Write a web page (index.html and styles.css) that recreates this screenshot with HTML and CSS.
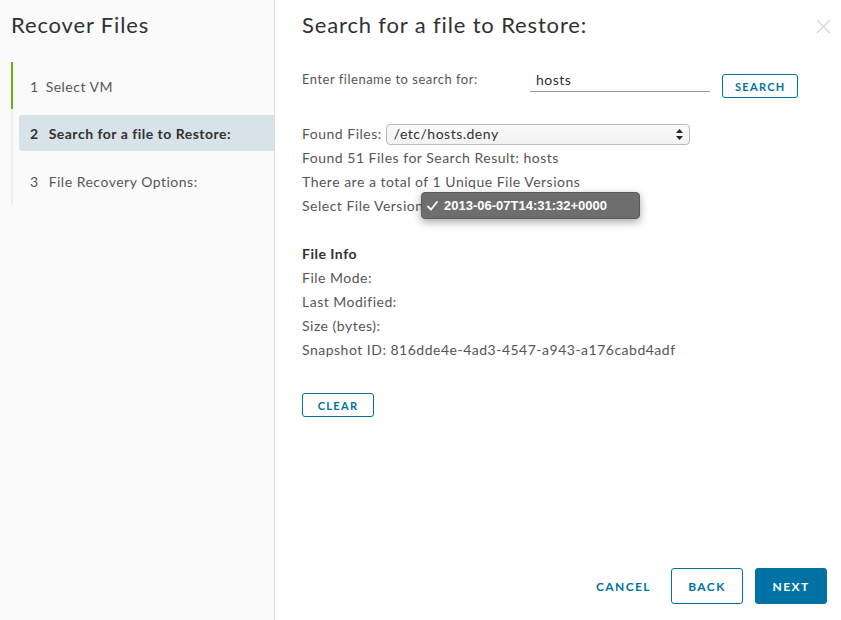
FILE: index.html
```html
<!DOCTYPE html>
<html>
<head>
<meta charset="utf-8">
<link rel="stylesheet" href="styles.css">
</head>
<body>
<div class="wizard">
  <aside class="sidebar">
    <h1 class="title">Recover Files</h1>
    <nav class="steps">
      <div class="step done"><div class="step-label"><span class="num">1</span>Select VM</div></div>
      <div class="step active"><div class="step-label"><span class="num">2</span>Search for a file to Restore:</div></div>
      <div class="step"><div class="step-label"><span class="num">3</span>File Recovery Options:</div></div>
    </nav>
  </aside>
  <main class="main">
    <button class="close" aria-label="Close">
      <svg width="15" height="15" viewBox="0 0 15 15"><path d="M1 1L14 14M14 1L1 14" stroke="#d4d4d4" stroke-width="1.3" fill="none"/></svg>
    </button>
    <h2 class="title">Search for a file to Restore:</h2>
    <div class="search-row">
      <label class="search-label">Enter filename to search for:</label>
      <div class="input">hosts</div>
      <button class="btn btn-outline btn-sm">SEARCH</button>
    </div>
    <div class="results">
      <div class="line found-row">
        <span>Found Files:</span>
        <div class="select"><span>/etc/hosts.deny</span>
          <svg class="arrows" width="7" height="11" viewBox="0 0 7 11"><path d="M3.5 0L7 4H0Z M3.5 11L0 7H7Z" fill="#222"/></svg>
        </div>
      </div>
      <div class="line">Found 51 Files for Search Result: hosts</div>
      <div class="line">There are a total of 1 Unique File Versions</div>
      <div class="line version-row">Select File Version:
        <div class="popup"><svg class="check" width="11" height="10" viewBox="0 0 11 10"><path d="M1 5.5L4 8.5L10 1" stroke="#fff" stroke-width="1.8" fill="none" stroke-linecap="round" stroke-linejoin="round"/></svg>2013-06-07T14:31:32+0000</div>
      </div>
    </div>
    <div class="info">
      <div class="line info-title">File Info</div>
      <div class="line">File Mode:</div>
      <div class="line">Last Modified:</div>
      <div class="line">Size (bytes):</div>
      <div class="line">Snapshot ID: 816dde4e-4ad3-4547-a943-a176cabd4adf</div>
    </div>
    <div class="clear-row"><button class="btn btn-outline btn-sm">CLEAR</button></div>
    <footer class="footer">
      <button class="btn btn-link">CANCEL</button>
      <button class="btn btn-outline">BACK</button>
      <button class="btn btn-primary">NEXT</button>
    </footer>
  </main>
</div>
</body>
</html>
```

FILE: styles.css
```css
* { box-sizing: border-box; }
html, body { margin: 0; padding: 0; background: #fff; }
body {
  font-family: Lato, "Open Sans", sans-serif;
  color: #565656;
  font-size: 14px;
  letter-spacing: 0.5px;
}
.wizard {
  display: flex;
  width: 841px;
  height: 620px;
  overflow: hidden;
}
.sidebar {
  width: 275px;
  flex: none;
  background: #fafafa;
  border-right: 1px solid #dedede;
}
.title {
  margin: 0;
  font-weight: 400;
  font-size: 22px;
  line-height: 26px;
  color: #313131;
  letter-spacing: 0.85px;
}
.sidebar .title { padding: 12px 0 0 11px; }
.steps {
  margin: 24px 0 0 11px;
  display: flex;
  flex-direction: column;
}
.step {
  border-left: 2px solid #eeeeee;
  padding: 6px 0 6px 6px;
}
.step.done { border-left-color: #60b515; padding-bottom: 5px; }
.step-label {
  height: 36px;
  display: flex;
  align-items: center;
  padding-left: 11px;
  color: #565656;
  border-radius: 3px 0 0 3px;
}
.num { margin-right: 10px; flex: none; }
.step.done .num { margin-right: 7px; }
.step.active .step-label {
  background: #d8e3e9;
  color: #313131;
  font-weight: 700;
}

.main {
  position: relative;
  flex: 1;
  display: flex;
  flex-direction: column;
  padding: 0 14px 16px 27px;
}
.main .title { padding-top: 12px; }
.close {
  position: absolute;
  top: 19px;
  right: 10px;
  border: 0;
  background: none;
  padding: 0;
  width: 15px;
  height: 15px;
}
.search-row {
  display: flex;
  align-items: flex-start;
  margin-top: 30px;
}
.search-label {
  width: 228px;
  flex: none;
  font-size: 13px;
  line-height: 18px;
  padding-top: 2px;
}
.input {
  width: 180px;
  height: 24px;
  border-bottom: 1px solid #9a9a9a;
  padding: 3px 0 0 6px;
  font-size: 14px;
  line-height: 18px;
  color: #313131;
}
.btn {
  font-family: Lato, "Open Sans", sans-serif;
  font-weight: 700;
  font-size: 12px;
  letter-spacing: 1.4px;
  height: 36px;
  padding: 0 12px;
  border-radius: 3px;
  cursor: pointer;
  background: #fff;
}
.btn-sm {
  height: 24px;
  font-size: 11px;
  letter-spacing: 1.3px;
}
.search-row .btn { margin: 6px 0 0 12px; width: 76px; }
.btn-outline { border: 1px solid #0072a3; color: #0072a3; width: 72px; }
.btn-link { border: 0; color: #0072a3; background: none; }
.btn-primary { border: 1px solid #0072a3; background: #0072a3; color: #fff; width: 72px; }

.results { margin-top: 24px; }
.line {
  height: 24px;
  line-height: 24px;
  white-space: nowrap;
}
.found-row { display: flex; align-items: center; }
.select {
  margin-left: 4px;
  width: 304px;
  height: 21px;
  border: 1px solid #b9b9b9;
  border-radius: 4px;
  background: linear-gradient(#fafafa, #f2f2f2);
  display: flex;
  align-items: center;
  justify-content: space-between;
  padding: 0 6px 0 7px;
  color: #313131;
  font-size: 14px;
}
.arrows { flex: none; }
.version-row { position: relative; }
.popup {
  position: absolute;
  left: 119px;
  top: -2px;
  width: 219px;
  height: 27px;
  background: #6e6e6e;
  border: 1px solid #5a5a5a;
  border-radius: 4px;
  box-shadow: 0 3px 8px rgba(0,0,0,0.35);
  color: #fff;
  font-family: "Liberation Sans", Arial, sans-serif;
  font-weight: 700;
  font-size: 13px;
  letter-spacing: 0;
  line-height: 25px;
  padding-left: 5px;
}
.check { margin: 0 6px 0 0; vertical-align: -1px; }

.info { margin-top: 24px; }
.info-title { font-weight: 700; color: #313131; }
.clear-row { margin-top: 31px; }
.clear-row .btn { width: 72px; }

.footer {
  margin-top: auto;
  display: flex;
  justify-content: flex-end;
  gap: 8px;
}
.footer .btn-primary { margin-left: 4px; }
```
